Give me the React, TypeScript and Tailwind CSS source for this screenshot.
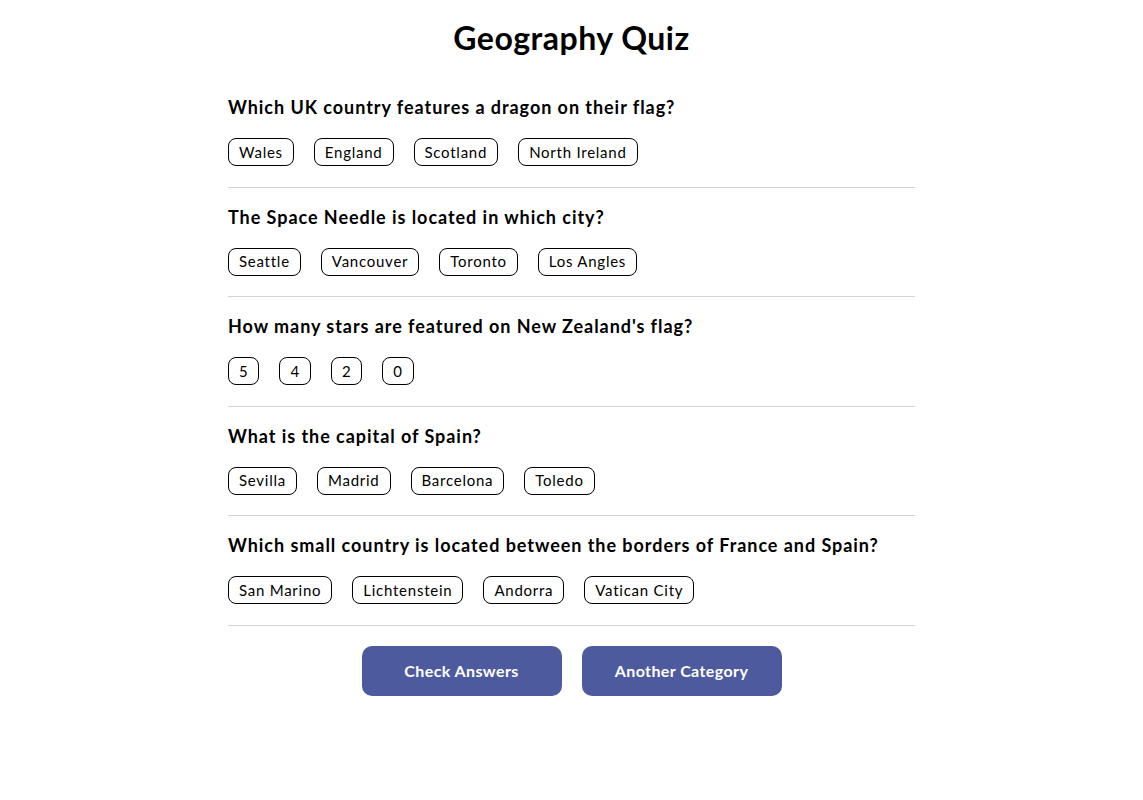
import React from 'react';

interface Question {
  text: string;
  answers: string[];
}

const questions: Question[] = [
  { text: 'Which UK country features a dragon on their flag?', answers: ['Wales', 'England', 'Scotland', 'North Ireland'] },
  { text: 'The Space Needle is located in which city?', answers: ['Seattle', 'Vancouver', 'Toronto', 'Los Angles'] },
  { text: "How many stars are featured on New Zealand's flag?", answers: ['5', '4', '2', '0'] },
  { text: 'What is the capital of Spain?', answers: ['Sevilla', 'Madrid', 'Barcelona', 'Toledo'] },
  { text: 'Which small country is located between the borders of France and Spain?', answers: ['San Marino', 'Lichtenstein', 'Andorra', 'Vatican City'] },
];

export default function App() {
  const [selected, setSelected] = React.useState<Record<number, string>>({});

  return (
    <main className="min-h-screen bg-white text-black font-['Lato',sans-serif]">
      <div className="mx-auto w-[687px] pt-[14px]">
        <h1 className="text-center text-[32px] leading-[48px] font-bold tracking-[0.5px]">Geography Quiz</h1>
        <div className="mt-[16px]">
          {questions.map((q, i) => (
            <section key={i} className="border-b border-[#d4d4d4] pt-[16px] pb-[20.5px]">
              <h2 className="text-[18px] leading-[27px] font-bold tracking-[0.95px]">{q.text}</h2>
              <div className="mt-[17px] flex gap-[20px]">
                {q.answers.map((a) => (
                  <button
                    key={a}
                    onClick={() => setSelected({ ...selected, [i]: a })}
                    className={`h-[28px] rounded-[8px] border border-black px-[10px] text-[15px] leading-none tracking-[0.75px] ${selected[i] === a ? 'bg-[#d6dbf5]' : 'bg-white'}`}
                  >
                    {a}
                  </button>
                ))}
              </div>
            </section>
          ))}
        </div>
        <div className="mt-[20px] flex justify-center gap-[20px]">
          <button className="h-[50px] w-[200px] rounded-[10px] bg-[#4d5b9e] text-[16px] font-bold tracking-[0.4px] text-white">Check Answers</button>
          <button className="h-[50px] w-[200px] rounded-[10px] bg-[#4d5b9e] text-[16px] font-bold tracking-[0.4px] text-white">Another Category</button>
        </div>
      </div>
    </main>
  );
}
